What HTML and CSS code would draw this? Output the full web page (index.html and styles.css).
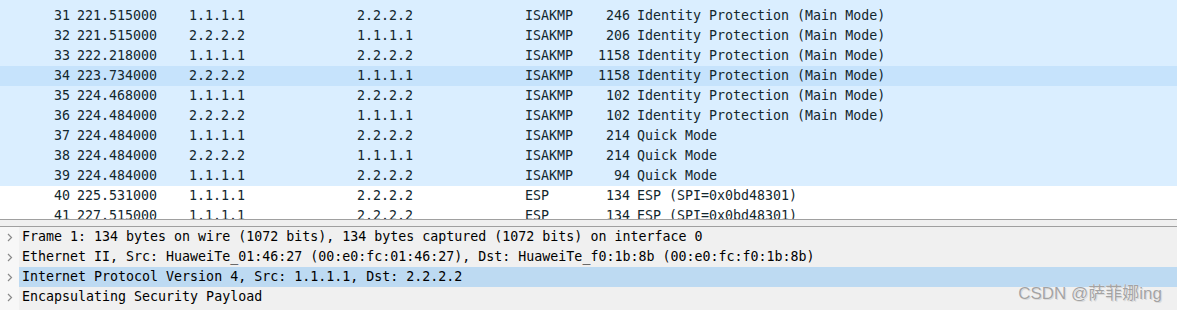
FILE: index.html
```html
<!DOCTYPE html>
<html lang="en">
<head>
    <meta charset="UTF-8">
    <meta name="viewport" content="width=device-width, initial-scale=1.0">
    <title>Packet capture</title>
    <link rel="stylesheet" href="styles.css">
</head>
<body>
    <div class="packet-list">
        <div class="row"><span class="no">31</span><span>221.515000</span><span>1.1.1.1</span><span>2.2.2.2</span><span>ISAKMP</span><span class="len">246</span><span>Identity Protection (Main Mode)</span></div>
        <div class="row"><span class="no">32</span><span>221.515000</span><span>2.2.2.2</span><span>1.1.1.1</span><span>ISAKMP</span><span class="len">206</span><span>Identity Protection (Main Mode)</span></div>
        <div class="row"><span class="no">33</span><span>222.218000</span><span>1.1.1.1</span><span>2.2.2.2</span><span>ISAKMP</span><span class="len">1158</span><span>Identity Protection (Main Mode)</span></div>
        <div class="row hover"><span class="no">34</span><span>223.734000</span><span>2.2.2.2</span><span>1.1.1.1</span><span>ISAKMP</span><span class="len">1158</span><span>Identity Protection (Main Mode)</span></div>
        <div class="row"><span class="no">35</span><span>224.468000</span><span>1.1.1.1</span><span>2.2.2.2</span><span>ISAKMP</span><span class="len">102</span><span>Identity Protection (Main Mode)</span></div>
        <div class="row"><span class="no">36</span><span>224.484000</span><span>2.2.2.2</span><span>1.1.1.1</span><span>ISAKMP</span><span class="len">102</span><span>Identity Protection (Main Mode)</span></div>
        <div class="row"><span class="no">37</span><span>224.484000</span><span>1.1.1.1</span><span>2.2.2.2</span><span>ISAKMP</span><span class="len">214</span><span>Quick Mode</span></div>
        <div class="row"><span class="no">38</span><span>224.484000</span><span>2.2.2.2</span><span>1.1.1.1</span><span>ISAKMP</span><span class="len">214</span><span>Quick Mode</span></div>
        <div class="row"><span class="no">39</span><span>224.484000</span><span>1.1.1.1</span><span>2.2.2.2</span><span>ISAKMP</span><span class="len">94</span><span>Quick Mode</span></div>
        <div class="row plain"><span class="no">40</span><span>225.531000</span><span>1.1.1.1</span><span>2.2.2.2</span><span>ESP</span><span class="len">134</span><span>ESP (SPI=0x0bd48301)</span></div>
        <div class="row plain"><span class="no">41</span><span>227.515000</span><span>1.1.1.1</span><span>2.2.2.2</span><span>ESP</span><span class="len">134</span><span>ESP (SPI=0x0bd48301)</span></div>
    </div>

    <div class="splitter"></div>

    <div class="details">
        <div class="node">
            <span class="arrow"><svg width="6" height="9" viewBox="0 0 6 9"><path d="M1 1 L4.5 4.5 L1 8" fill="none" stroke="#8a8a8a" stroke-width="1.2"/></svg></span>
            <span class="label">Frame 1: 134 bytes on wire (1072 bits), 134 bytes captured (1072 bits) on interface 0</span>
        </div>
        <div class="node">
            <span class="arrow"><svg width="6" height="9" viewBox="0 0 6 9"><path d="M1 1 L4.5 4.5 L1 8" fill="none" stroke="#8a8a8a" stroke-width="1.2"/></svg></span>
            <span class="label">Ethernet II, Src: HuaweiTe_01:46:27 (00:e0:fc:01:46:27), Dst: HuaweiTe_f0:1b:8b (00:e0:fc:f0:1b:8b)</span>
        </div>
        <div class="node selected">
            <span class="arrow"><svg width="6" height="9" viewBox="0 0 6 9"><path d="M1 1 L4.5 4.5 L1 8" fill="none" stroke="#8a8a8a" stroke-width="1.2"/></svg></span>
            <span class="label">Internet Protocol Version 4, Src: 1.1.1.1, Dst: 2.2.2.2</span>
        </div>
        <div class="node">
            <span class="arrow"><svg width="6" height="9" viewBox="0 0 6 9"><path d="M1 1 L4.5 4.5 L1 8" fill="none" stroke="#8a8a8a" stroke-width="1.2"/></svg></span>
            <span class="label">Encapsulating Security Payload</span>
        </div>
        <div class="watermark">CSDN @萨菲娜ing</div>
    </div>
</body>
</html>
```

FILE: styles.css
```css
body {
    margin: 0;
    background: #f0f0f0;
    font-family: 'DejaVu Sans Mono', 'Liberation Mono', monospace;
    font-size: 13.3px;
    overflow: hidden;
}
.packet-list {
    height: 213px;
    padding-top: 6px;
    background: #daeeff;
    border-bottom: 1px solid #a0a0a0;
    overflow: hidden;
}
.row {
    display: grid;
    grid-template-columns: 77px 112px 168px 168px 65px 47px 1fr;
    height: 20px;
    line-height: 20px;
    background: #daeeff;
    color: #12272e;
    white-space: pre;
}
.row .no,
.row .len {
    text-align: right;
    padding-right: 7px;
}
.row.hover {
    background: #c6e3fc;
}
.row.plain {
    background: #ffffff;
}
.splitter {
    height: 6px;
    background: #f0f0f0;
    border-bottom: 1px solid #a0a0a0;
}
.details {
    position: relative;
    height: 90px;
    background: linear-gradient(90deg, #f7f7f7 0, #f7f7f7 19px, #f0f0f0 19px);
}
.node {
    display: flex;
    align-items: center;
    height: 20px;
    line-height: 20px;
    color: #000000;
    white-space: pre;
}
.arrow {
    width: 19px;
    display: flex;
    justify-content: center;
    padding-left: 0;
}
.label {
    flex: 1;
    padding-left: 3px;
}
.node.selected .label {
    background: #bddaf2;
}
.watermark {
    position: absolute;
    right: 15px;
    top: 52px;
    font-family: 'Liberation Sans', 'Noto Sans CJK SC', sans-serif;
    font-size: 17px;
    color: #a3a3a3;
    text-shadow: 0 0 1px #ffffff, 1px 1px 0 #d8d8d8;
}
```
